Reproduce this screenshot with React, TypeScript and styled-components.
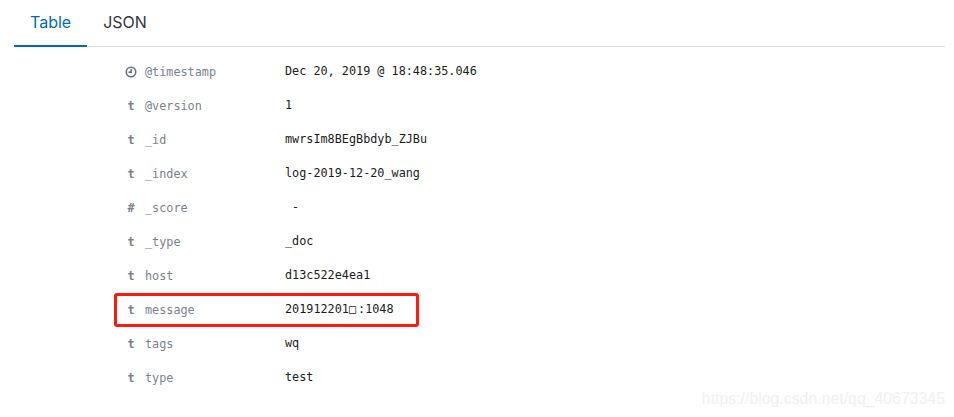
import styled, { createGlobalStyle } from 'styled-components'

const GlobalStyle = createGlobalStyle`
    html, body {
        margin: 0;
        padding: 0;
        background: #ffffff;
    }
`

const SPage = styled.div`
    position: relative;
    box-sizing: border-box;
    width: 954px;
    height: 417px;
    padding: 0 9px 0 14px;
    overflow: hidden;
    background: #ffffff;
`

const STabs = styled.div`
    display: flex;
    height: 47px;
    box-sizing: border-box;
    border-bottom: 1px solid #d3dae6;
`

const STab = styled.div<{ $active?: boolean }>`
    box-sizing: border-box;
    height: 47px;
    padding: 12px 16px 0;
    font-family: Inter, sans-serif;
    font-size: 16px;
    line-height: 20px;
    color: ${(p) => (p.$active ? '#006bb4' : '#343741')};
    border-bottom: ${(p) => (p.$active ? '2px solid #006bb4' : 'none')};
`

const SRows = styled.div`
    display: flex;
    flex-direction: column;
    padding: 8px 0 0 111px;
`

const SRow = styled.div`
    position: relative;
    display: flex;
    align-items: center;
    height: 34px;
    font-family: "DejaVu Sans Mono", "Liberation Mono", monospace;
    font-size: 11.8px;
`

const SType = styled.span`
    display: flex;
    justify-content: center;
    width: 12px;
    margin-right: 8px;
    font-weight: 700;
    color: #7b818c;
`

const SName = styled.span`
    width: 140px;
    color: #7b818c;
`

const SValue = styled.span`
    margin-bottom: 2px;
    color: #1a1c21;
`

const SMissingGlyph = styled.span`
    letter-spacing: 2px;
`

const SHighlight = styled.div`
    position: absolute;
    left: -11px;
    top: 0;
    width: 305px;
    height: 34px;
    box-sizing: border-box;
    border: 3px solid #fb1a10;
    border-radius: 3px;
`

const SWatermark = styled.div`
    position: absolute;
    right: 9px;
    bottom: 8px;
    font-family: "Liberation Sans", Arial, sans-serif;
    font-size: 15.85px;
    line-height: 20px;
    color: #f0f0f0;
`

const ClockIcon = () => (
    <svg width="12" height="12" viewBox="0 0 12 12" fill="none" stroke="#69707d" strokeWidth="1.6">
        <circle cx="6" cy="6" r="4.75" />
        <path d="M6.2 3v3.2H3.4" />
    </svg>
)

const rows = [
    { type: 'clock', name: '@timestamp', value: 'Dec 20, 2019 @ 18:48:35.046' },
    { type: 't', name: '@version', value: '1' },
    { type: 't', name: '_id', value: 'mwrsIm8BEgBbdyb_ZJBu' },
    { type: 't', name: '_index', value: 'log-2019-12-20_wang' },
    { type: '#', name: '_score', value: '\u00a0-' },
    { type: 't', name: '_type', value: '_doc' },
    { type: 't', name: 'host', value: 'd13c522e4ea1' },
    { type: 't', name: 'message', value: '201912201', rest: ':1048', marked: true },
    { type: 't', name: 'tags', value: 'wq' },
    { type: 't', name: 'type', value: 'test' },
]

const App = () => {
    return (
        <SPage>
            <GlobalStyle />
            <STabs>
                <STab $active>Table</STab>
                <STab>JSON</STab>
            </STabs>
            <SRows>
                {rows.map((row) => (
                    <SRow key={row.name}>
                        <SType>{row.type === 'clock' ? <ClockIcon /> : row.type}</SType>
                        <SName>{row.name}</SName>
                        <SValue>
                            {row.value}
                            {row.rest && <SMissingGlyph>{'\u25a1'}</SMissingGlyph>}
                            {row.rest}
                        </SValue>
                        {row.marked && <SHighlight />}
                    </SRow>
                ))}
            </SRows>
            <SWatermark>https://blog.csdn.net/qq_40673345</SWatermark>
        </SPage>
    )
}

export default App
